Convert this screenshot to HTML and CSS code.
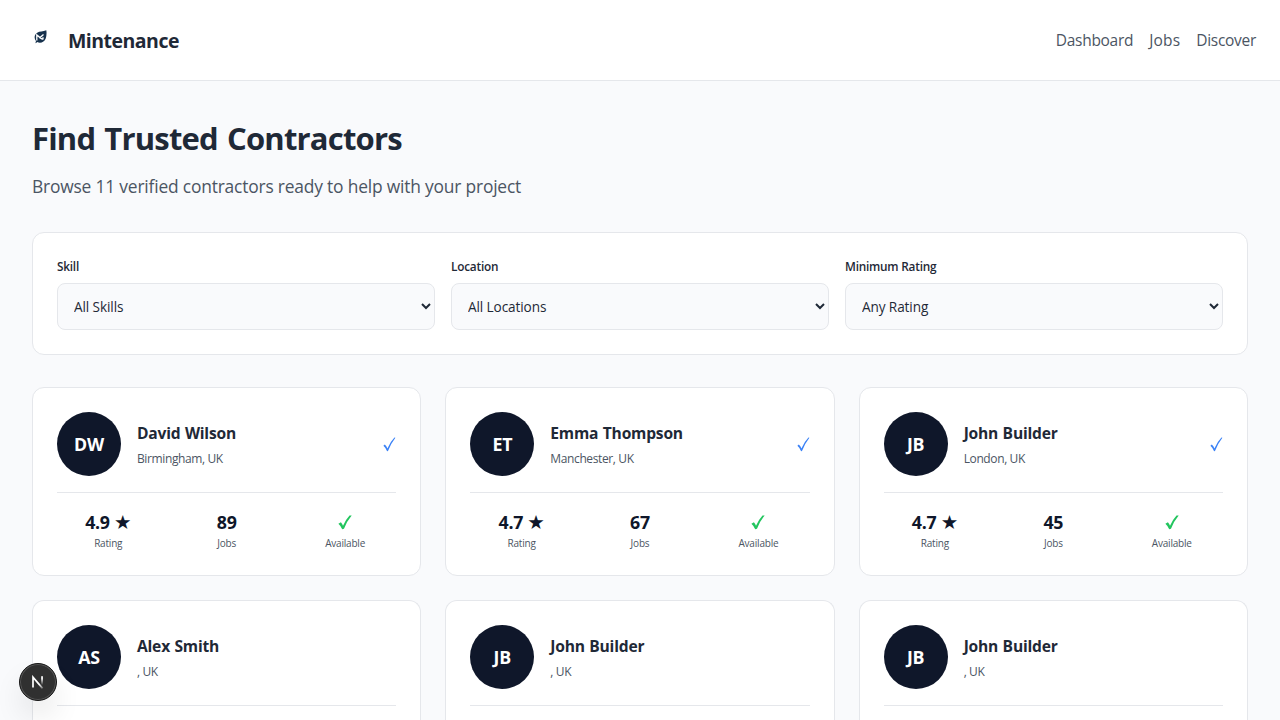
FILE: index.html
```html
<!DOCTYPE html>
<html lang="en">
<head>
<meta charset="utf-8">
<title>Find Trusted Contractors | Mintenance</title>
<link rel="stylesheet" href="styles.css">
</head>
<body>
<svg class="sprite" aria-hidden="true">
  <symbol id="check" viewBox="0 0 13 15"><path d="M.4 8.8 1.8 7.5Q3.6 9.2 4.4 11.5 7.2 5 11.4.6L12.4.8Q7.6 7 5 13.9L4.1 14.2Q2.8 10.9.4 8.8Z"/></symbol>
  <symbol id="check-bold" viewBox="0 0 14 15"><path d="M.4 8.8 2.9 7.2Q4.4 9 5 10.7 7.7 4.6 11.5.5L13.7.4Q8.6 6.4 6 13.7L4.2 14.3Q2.9 11 .4 8.8Z"/></symbol>
</svg>
<header class="navbar">
  <a class="brand">
    <svg class="brand-logo" viewBox="0 0 13 14"><path class="leaf" d="M12.3.3Q13 4 11.8 8.2C10.5 12 6.5 13.7 3.2 12L1.8 13.3 1.5 12.4 2 11C-.2 8.2.2 4.7 3.2 2.8 5.6 1.2 9 1.6 12.3.3Z"/><path class="leaf-mark" d="M2.8 10.5V4.9L6 7.6 9.5 4.6M5.3 7.4 8.8 9.4M9 7.2V9.5"/></svg>
    <span class="brand-name">Mintenance</span>
  </a>
  <nav class="nav-links"><a class="link-dashboard">Dashboard</a><a class="link-jobs">Jobs</a><a class="link-discover">Discover</a></nav>
</header>
<main class="page">
  <h1 class="title">Find Trusted Contractors</h1>
  <p class="subtitle">Browse 11 verified contractors ready to help with your project</p>
  <section class="filters">
    <div class="field"><label class="field-label" for="skill">Skill</label><select class="field-select" id="skill"><option>All Skills</option></select></div>
    <div class="field"><label class="field-label" for="location">Location</label><select class="field-select" id="location"><option>All Locations</option></select></div>
    <div class="field"><label class="field-label" for="rating">Minimum Rating</label><select class="field-select" id="rating"><option>Any Rating</option></select></div>
  </section>
  <section class="grid">
    <article class="card">
      <div class="card-head"><div class="avatar">DW</div><div class="person"><h3 class="name">David Wilson</h3><p class="place">Birmingham, UK</p></div><svg class="verified"><use href="#check"/></svg></div>
      <div class="stats"><div class="stat"><div class="value">4.9 <span class="star">★</span></div><div class="caption">Rating</div></div><div class="stat"><div class="value">89</div><div class="caption">Jobs</div></div><div class="stat"><div class="value"><svg class="available"><use href="#check-bold"/></svg></div><div class="caption">Available</div></div></div>
    </article>
    <article class="card">
      <div class="card-head"><div class="avatar">ET</div><div class="person"><h3 class="name">Emma Thompson</h3><p class="place">Manchester, UK</p></div><svg class="verified"><use href="#check"/></svg></div>
      <div class="stats"><div class="stat"><div class="value">4.7 <span class="star">★</span></div><div class="caption">Rating</div></div><div class="stat"><div class="value">67</div><div class="caption">Jobs</div></div><div class="stat"><div class="value"><svg class="available"><use href="#check-bold"/></svg></div><div class="caption">Available</div></div></div>
    </article>
    <article class="card">
      <div class="card-head"><div class="avatar">JB</div><div class="person"><h3 class="name">John Builder</h3><p class="place">London, UK</p></div><svg class="verified"><use href="#check"/></svg></div>
      <div class="stats"><div class="stat"><div class="value">4.7 <span class="star">★</span></div><div class="caption">Rating</div></div><div class="stat"><div class="value">45</div><div class="caption">Jobs</div></div><div class="stat"><div class="value"><svg class="available"><use href="#check-bold"/></svg></div><div class="caption">Available</div></div></div>
    </article>
    <article class="card card-cut">
      <div class="card-head"><div class="avatar">AS</div><div class="person"><h3 class="name">Alex Smith</h3><p class="place">, UK</p></div></div>
      <div class="stats"></div>
    </article>
    <article class="card card-cut">
      <div class="card-head"><div class="avatar">JB</div><div class="person"><h3 class="name">John Builder</h3><p class="place">, UK</p></div></div>
      <div class="stats"></div>
    </article>
    <article class="card card-cut">
      <div class="card-head"><div class="avatar">JB</div><div class="person"><h3 class="name">John Builder</h3><p class="place">, UK</p></div></div>
      <div class="stats"></div>
    </article>
  </section>
</main>
<div class="dev-badge"><svg class="dev-icon" viewBox="0 0 14 14"><defs><linearGradient id="fade" gradientUnits="userSpaceOnUse" x1="11" y1="1" x2="11" y2="10"><stop offset=".3" stop-color="#fff"/><stop offset="1" stop-color="#fff" stop-opacity="0"/></linearGradient><linearGradient id="tail" gradientUnits="userSpaceOnUse" x1="7" y1="7" x2="12.5" y2="14"><stop offset=".3" stop-color="#fff"/><stop offset="1" stop-color="#fff" stop-opacity=".15"/></linearGradient></defs><path d="M2 12.5V2.2L11.6 13.4" fill="none" stroke="url(#tail)" stroke-width="1.7"/><rect x="10.2" y="1.2" width="1.7" height="9" fill="url(#fade)"/></svg></div>
</body>
</html>
```
FILE: styles.css
```css
* { box-sizing: border-box; margin: 0; padding: 0; }
html { height: 720px; overflow: hidden; }
body { height: 720px; overflow: hidden; background: #f9fafc; color: #1f2937; font-family: "Open Sans", "Noto Sans", sans-serif; font-weight: 370; }
.sprite { display: none; }
.navbar { display: flex; align-items: center; justify-content: space-between; height: 81px; padding: 0 24px 0 34px; background: #fff; border-bottom: 1px solid #e5e7eb; }
.brand { display: flex; align-items: center; gap: 21px; }
.brand-logo { width: 13px; height: 14px; margin-bottom: 7px; }
.leaf { fill: #17324d; }
.leaf-mark { fill: none; stroke: #fff; stroke-width: 1.3; }
.brand-name { padding-top: 2px; font-size: 19.5px; line-height: 28px; font-weight: 700; letter-spacing: -0.52px; }
.nav-links { display: flex; gap: 16px; color: #4b5563; font-size: 15.5px; line-height: 24px; letter-spacing: -0.3px; }
.link-jobs { letter-spacing: 0.2px; }
.page { padding: 32px; }
.title { padding-top: 1px; font-size: 31px; line-height: 48px; font-weight: 700; letter-spacing: -0.8px; word-spacing: 1.8px; margin-bottom: 11px; }
.subtitle { color: #4b5563; font-size: 17.4px; line-height: 27px; letter-spacing: -0.19px; margin-bottom: 32px; }
.filters { display: grid; grid-template-columns: repeat(3, 1fr); gap: 16px; height: 123px; padding: 24px; margin-bottom: 32px; background: #fff; border: 1px solid #e5e7eb; border-radius: 12px; }
.field { display: flex; flex-direction: column; gap: 8px; }
.field-label { font-size: 11.8px; line-height: 18px; font-weight: 600; letter-spacing: -0.22px; }
.field-select { height: 47px; padding: 12px; color: #1f2937; background: #f9fafc; border: 1px solid #e5e7eb; border-radius: 8px; font-family: inherit; font-size: 13.6px; font-weight: inherit; letter-spacing: -0.1px; }
.grid { display: grid; grid-template-columns: repeat(3, 1fr); gap: 24px; }
.card { height: 189px; padding: 24px; background: #fff; border: 1px solid #e5e7eb; border-radius: 12px; }
.card-cut { height: 120px; border-bottom: 0; border-radius: 12px 12px 0 0; }
.card-head { display: flex; align-items: center; gap: 16px; margin-bottom: 16px; }
.avatar { display: flex; align-items: center; justify-content: center; width: 64px; height: 64px; color: #fff; background: #0f172a; border-radius: 50%; font-size: 17.8px; font-weight: 700; letter-spacing: -0.2px; }
.person { flex: 1; }
.name { font-size: 15.6px; line-height: 24px; font-weight: 700; letter-spacing: -0.2px; word-spacing: 0.6px; margin-bottom: 5px; }
.place { color: #4b5563; font-size: 12px; line-height: 17px; letter-spacing: -0.38px; }
.verified { width: 13px; height: 15px; fill: #3b82f6; }
.stats { display: grid; grid-template-columns: repeat(3, 1fr); gap: 16px; padding-top: 16px; border-top: 1px solid #e5e7eb; text-align: center; }
.value { height: 27px; color: #0f172a; font-size: 17.8px; line-height: 27px; font-weight: 700; letter-spacing: -0.3px; }
.star { font-family: "DejaVu Sans", sans-serif; font-size: 19.5px; font-weight: 400; line-height: 1; }
.available { width: 14px; height: 15px; margin-top: 6px; fill: #22c55e; vertical-align: top; }
.caption { color: #4b5563; font-size: 10px; line-height: 15px; letter-spacing: -0.2px; }
.dev-badge { position: fixed; left: 19px; top: 663px; display: flex; align-items: center; justify-content: center; width: 38px; height: 38px; border: 1px solid #171717; border-radius: 50%; background: #303030; box-shadow: inset 0 0 0 1px #565656, 0 16px 32px -8px rgba(0,0,0,.24); }
.dev-icon { width: 14px; height: 14px; }
```
